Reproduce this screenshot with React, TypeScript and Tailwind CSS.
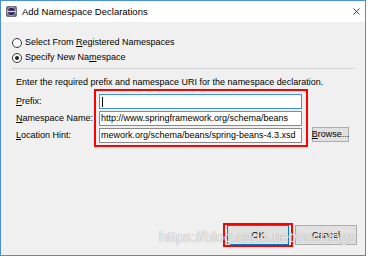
import React from 'react';

const font = "font-['Liberation_Sans',Arial,sans-serif]";

function Radio({ checked }: { checked?: boolean }) {
  return (
    <span className="w-[10px] h-[10px] rounded-full border border-[#333] bg-white flex items-center justify-center">
      {checked && <span className="w-[4px] h-[4px] rounded-full bg-[#222]" />}
    </span>
  );
}

function Field({ children, focused }: { children?: React.ReactNode; focused?: boolean }) {
  return (
    <div
      className={`h-[15px] bg-white border flex items-center px-[1px] overflow-hidden whitespace-nowrap ${
        focused ? 'border-[#3d8fe0]' : 'border-[#8a8a8a]'
      }`}
    >
      {children}
    </div>
  );
}

export default function App() {
  return (
    <div className={`relative w-[366px] h-[256px] border border-[#4a90d9] flex flex-col bg-[#f0f0f0] text-[9px] leading-none text-black ${font}`}>
      <div className="h-[21px] bg-white flex items-center pl-[5px] pr-[5px]">
        <svg width="11" height="11" viewBox="0 0 11 11">
          <rect x="0" y="0" width="11" height="11" rx="2" fill="#6e6e7e" />
          <circle cx="5.5" cy="5.5" r="4.2" fill="#2d2656" stroke="#b7b0d8" strokeWidth="1" />
          <rect x="1.5" y="4.8" width="8" height="1.4" fill="#d8d4ec" />
        </svg>
        <span className="ml-[5px] text-[9.5px]">Add Namespace Declarations</span>
        <svg className="ml-auto" width="7" height="7" viewBox="0 0 7 7">
          <path d="M0.5 0.5 L6.5 6.5 M6.5 0.5 L0.5 6.5" stroke="#444" strokeWidth="1" />
        </svg>
      </div>

      <div className="flex-1 flex flex-col pt-[13px]">
        <div className="h-[15px] flex items-center pl-[11px] gap-[3px]">
          <Radio />
          <span>
            Select From <span className="underline">R</span>egistered Namespaces
          </span>
        </div>
        <div className="h-[15px] flex items-center pl-[11px] gap-[3px]">
          <Radio checked />
          <span>
            Specify New Na<span className="underline">m</span>espace
          </span>
        </div>
        <div className="mt-[3px] ml-[11px] mr-[10px] h-px bg-[#d2d2d2]" />

        <div className="mt-[6px] h-[14px] flex items-center pl-[15px]">
          Enter the required prefix and namespace URI for the namespace declaration.
        </div>

        <div className="flex pl-[15px]">
          <div className="w-[78px] flex flex-col pt-[5px] gap-[2px]">
            <div className="h-[15px] flex items-center">
              <span><span className="underline">P</span>refix:</span>
            </div>
            <div className="h-[15px] flex items-center">
              <span><span className="underline">N</span>amespace Name:</span>
            </div>
            <div className="h-[15px] flex items-center">
              <span><span className="underline">L</span>ocation Hint:</span>
            </div>
          </div>
          <div className="w-[214px] border-2 border-[#ff0000] pt-[3px] pb-[2px] pl-[3px] pr-[4px] flex flex-col gap-[2px]">
            <Field focused>
              <span className="w-px h-[10px] bg-black ml-[1px]" />
            </Field>
            <Field>http://www.springframework.org/schema/beans</Field>
            <Field>mework.org/schema/beans/spring-beans-4.3.xsd</Field>
          </div>
          <div className="self-end mb-[5px] ml-[4px] h-[15px] w-[37px] border border-[#adadad] bg-[#e1e1e1] flex items-center justify-center">
            <span><span className="underline">B</span>rowse...</span>
          </div>
        </div>

        <div className="flex-1" />

        <div className="flex justify-end items-center pr-[8px] pb-[8px]">
          <div className="h-[24px] border-2 border-[#ff0000] px-[2px] flex items-center">
            <div className="w-[62px] h-[20px] border border-[#0078d7] bg-[#e1e1e1] flex items-center justify-center">
              OK
            </div>
          </div>
          <div className="ml-[2px] w-[62px] h-[20px] border border-[#adadad] bg-[#e1e1e1] flex items-center justify-center">
            Cancel
          </div>
        </div>
      </div>

      <div className="absolute left-[158px] top-[228px] text-[15px] leading-none text-white/90 [text-shadow:0_0_1px_rgba(0,0,0,0.55)] whitespace-nowrap">
        https://blog.csdn.net/cccblogs
      </div>
    </div>
  );
}
